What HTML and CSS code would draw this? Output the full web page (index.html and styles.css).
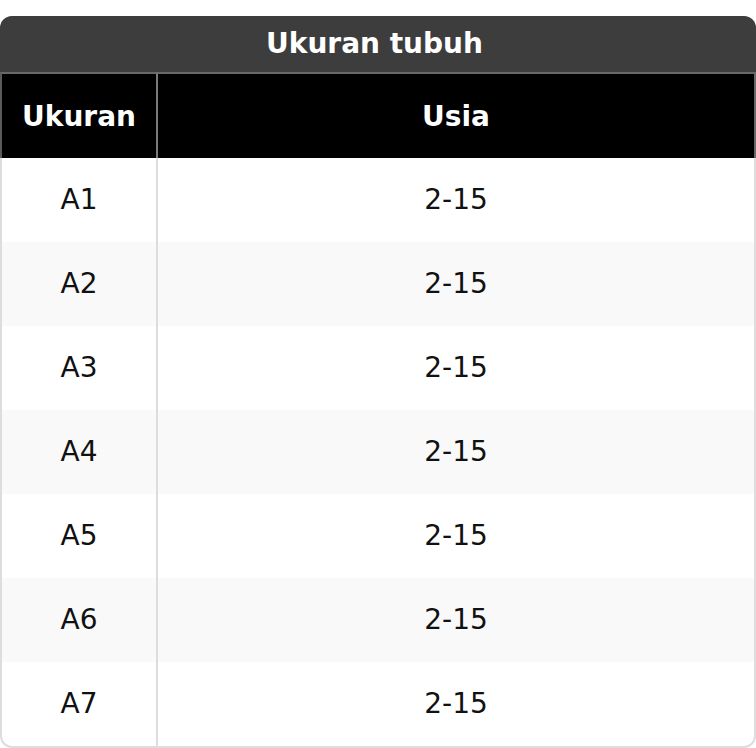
FILE: index.html
```html
<!DOCTYPE html>
<html lang="id">
<head>
<meta charset="utf-8">
<title>Ukuran tubuh</title>
<link rel="stylesheet" href="styles.css">
</head>
<body>
<div class="frame">
  <div class="caption">Ukuran tubuh</div>
  <table class="sizes">
    <thead>
      <tr><th class="c1">Ukuran</th><th class="c2">Usia</th></tr>
    </thead>
    <tbody>
      <tr><td class="c1">A1</td><td class="c2">2-15</td></tr>
      <tr class="alt"><td class="c1">A2</td><td class="c2">2-15</td></tr>
      <tr><td class="c1">A3</td><td class="c2">2-15</td></tr>
      <tr class="alt"><td class="c1">A4</td><td class="c2">2-15</td></tr>
      <tr><td class="c1">A5</td><td class="c2">2-15</td></tr>
      <tr class="alt"><td class="c1">A6</td><td class="c2">2-15</td></tr>
      <tr><td class="c1">A7</td><td class="c2">2-15</td></tr>
    </tbody>
  </table>
</div>
</body>
</html>
```
FILE: styles.css
```css
html, body {
  margin: 0;
  padding: 0;
  background: #ffffff;
}
body {
  font-family: "DejaVu Sans", Verdana, sans-serif;
  color: #111111;
}
.frame {
  margin-top: 16px;
  width: 756px;
  border-radius: 12px;
  overflow: hidden;
  background: #ffffff;
  box-shadow: inset 0 0 0 2px #dddddd;
}
.caption {
  height: 56px;
  line-height: 56px;
  padding-right: 7px;
  background: #3d3d3d;
  color: #ffffff;
  font-size: 28px;
  font-weight: bold;
  text-align: center;
}
.sizes {
  width: 100%;
  border-collapse: separate;
  border-spacing: 0;
  table-layout: fixed;
}
.sizes th,
.sizes td {
  height: 84px;
  padding: 0;
  font-size: 28px;
  text-align: center;
  vertical-align: middle;
  box-sizing: border-box;
}
.sizes th {
  height: 86px;
  background: #000000;
  color: #ffffff;
  font-weight: bold;
  border-top: 2px solid #686868;
}
.sizes th.c1 {
  width: 158px;
  border-left: 2px solid #5a5a5a;
  border-right: 2px solid #7a7a7a;
}
.sizes th.c2 {
  border-right: 2px solid #686868;
}
.sizes td {
  padding-bottom: 2px;
}
.sizes td.c1 {
  border-right: 2px solid #dddddd;
}
.sizes tr.alt td {
  background: #f9f9f9;
}
.sizes tr.alt td.c1 {
  border-left: 2px solid #dddddd;
}
.sizes tr.alt td.c2 {
  border-right: 2px solid #dddddd;
}
.sizes tbody tr:not(.alt) td.c1 {
  padding-left: 2px;
}
.sizes tbody tr:not(.alt) td.c2 {
  padding-right: 2px;
}
.sizes tbody tr:last-child td {
  height: 86px;
  padding-bottom: 4px;
}
```
